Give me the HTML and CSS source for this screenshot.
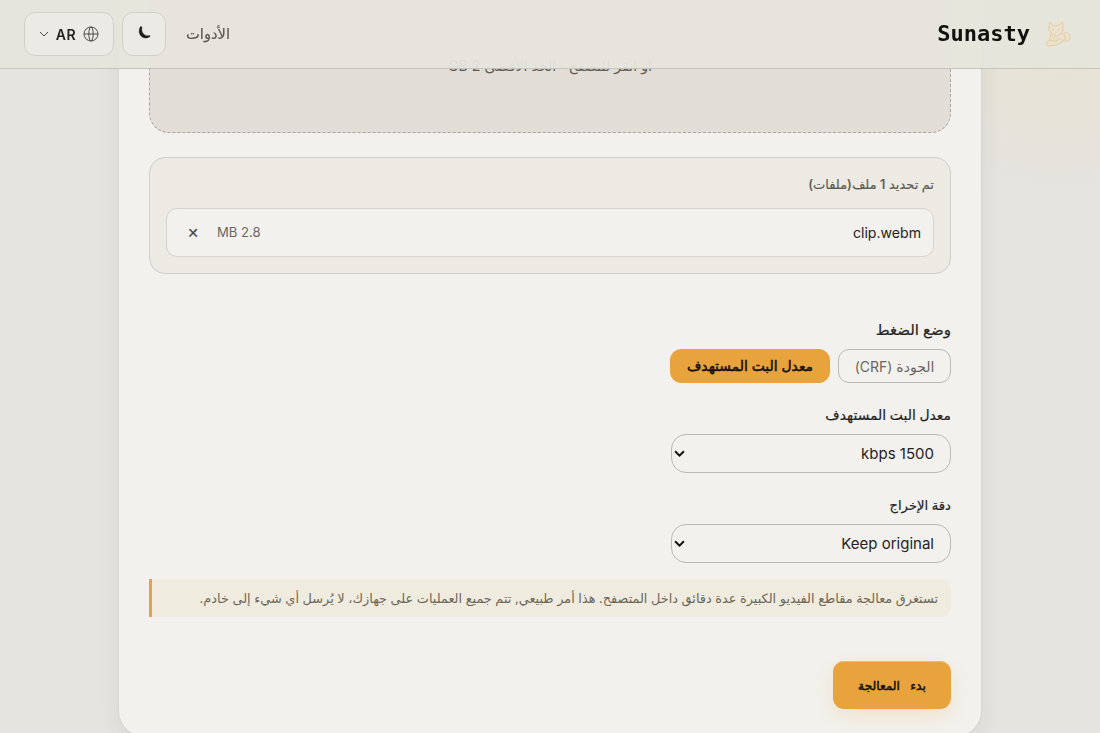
FILE: index.html
```html
<!DOCTYPE html>
<html lang="ar" dir="rtl">
	<head>
		<meta charset="UTF-8">
		<title>Sunasty</title>
		<link rel="stylesheet" href="styles.css">
	</head>

	<body>
		<header class="topbar">
			<a class="brand" dir="ltr">
				<span class="brand-name">Sunasty</span>
				<svg class="brand-logo" viewBox="0 0 28 28" aria-hidden="true">
					<path d="M6 1l3 4h6l4-4 1 8-2 4-5 3-5-3-3-4z M8.500 8.500l2 1 M14 9.500l2-1 M11 12l1 1 1-1 M7 13l-1 7 6 1 6-3 M18 12l3 2 1 5-4 2 M21 13c3-3 6 0 6 4 0 4-4 5-7 3 M6 20l-4 3 2 3 8-1 8-4 M9 16l1 3 M14 17l1 2"/>
				</svg>
			</a>
			<nav class="tools">
				<a class="tools-link">الأدوات</a>
				<button class="icon-btn">
					<svg class="moon" viewBox="0 0 16 16"><path d="M4.500 1.500C0.500 8 6 16.500 14 11.500V10.500C9 12 4.500 7.500 6 2z"/></svg>
				</button>
				<button class="lang-btn">
					<svg class="globe" viewBox="0 0 16 16"><circle cx="8" cy="8" r="7"/><ellipse cx="8" cy="8" rx="2.2" ry="7"/><path d="M1 8h14"/></svg>
					<span>AR</span>
					<svg class="chevron" viewBox="0 0 10 10"><path d="M1 3l4 4 4-4"/></svg>
				</button>
			</nav>
		</header>

		<main class="card">
			<div class="dropzone">
				<p>أو انقر للتصفح · الحد الأقصى 2 GB</p>
			</div>

			<section class="files">
				<p class="files-title">تم تحديد 1 ملف(ملفات)</p>
				<div class="file">
					<span class="file-name">clip.webm</span>
					<span class="file-size">2.8 MB</span>
					<button class="file-remove">✕</button>
				</div>
			</section>

			<section class="options">
				<div class="label label-mode">وضع الضغط</div>
				<div class="modes">
					<button class="mode">الجودة (CRF)</button>
					<button class="mode mode-active">معدل البت المستهدف</button>
				</div>
				<div class="label">معدل البت المستهدف</div>
				<div class="select">
					<span>1500 kbps</span>
					<svg viewBox="0 0 10 8"><path d="M1 2l4 4 4-4"/></svg>
				</div>
				<div class="label label-size">دقة الإخراج</div>
				<div class="select">
					<span>Keep original</span>
					<svg viewBox="0 0 10 8"><path d="M1 2l4 4 4-4"/></svg>
				</div>
			</section>

			<p class="note">تستغرق معالجة مقاطع الفيديو الكبيرة عدة دقائق داخل المتصفح. هذا أمر طبيعي, تتم جميع العمليات على جهازك، لا يُرسل أي شيء إلى خادم.</p>
			<button class="start">بدء المعالجة</button>
		</main>
	</body>
</html>
```

FILE: styles.css
```css
* {
	box-sizing: border-box;
}
html, body, p {
	margin: 0;
}
body {
	height: 733px;
	overflow: hidden;
	font-family: Inter, "DejaVu Sans", sans-serif;
	color: #24231f;
	background: radial-gradient(circle at 1060px 40px, #e7e2d3 0, rgba(229, 228, 224, 0) 170px), #e5e4e0;
}
button {
	font: inherit;
	color: inherit;
	border: none;
	background: none;
	padding: 0;
}
.topbar {
	position: fixed;
	top: 0;
	left: 0;
	right: 0;
	z-index: 1;
	height: 69px;
	padding: 0 24px;
	display: flex;
	align-items: center;
	justify-content: space-between;
	border-bottom: 1px solid #c6c4be;
	background: rgba(229, 228, 220, 0.94);
}
.brand {
	display: flex;
	align-items: center;
	gap: 14px;
	padding-right: 5px;
}
.brand-name {
	padding-bottom: 2px;
	font: bold 22px "DejaVu Sans Mono", monospace;
	color: #11110d;
}
.brand-logo {
	width: 27px;
	height: 27px;
	fill: rgba(236, 222, 196, 0.6);
	stroke: #e6c99b;
	stroke-width: 1;
	stroke-linejoin: round;
}
.tools {
	display: flex;
	align-items: center;
	gap: 8px;
}
.tools-link {
	margin-left: 12px;
	font-size: 14.7px;
	color: #5c5952;
	-webkit-text-stroke: 0.2px;
}
.icon-btn, .lang-btn {
	height: 44px;
	display: flex;
	align-items: center;
	justify-content: center;
	border: 1px solid #d0cfca;
	border-radius: 11px;
	background: #eceae4;
}
.icon-btn {
	width: 44px;
}
.moon {
	width: 16px;
	margin-bottom: 2px;
	fill: #1c1b18;
	stroke: #1c1b18;
	stroke-width: 0.4;
}
.lang-btn {
	width: 90px;
	gap: 7px;
	font-size: 14px;
	font-weight: 600;
	letter-spacing: 0.5px;
}
.globe {
	width: 16px;
	fill: none;
	stroke: #4c4a44;
}
.chevron {
	width: 10px;
	fill: none;
	stroke: #4c4a44;
}
.card {
	width: 864px;
	height: 737px;
	margin: 0 auto;
	padding: 0 30px;
	border: 1px solid #d6d5d0;
	border-top: none;
	border-radius: 0 0 26px 26px;
	background: #f2f1ed;
	box-shadow: 0 8px 24px rgba(60, 55, 40, 0.07);
}
.dropzone {
	height: 133px;
	padding-top: 57px;
	border: 1px dashed #aaa69d;
	border-top: none;
	border-radius: 0 0 20px 20px;
	background: #e2ded7;
	text-align: center;
	font-size: 14.2px;
	line-height: 18px;
	color: #5c5952;
}
.files {
	height: 117px;
	margin-top: 24px;
	padding: 16px;
	border: 1px solid #cfcdc8;
	border-radius: 16px;
	background: #eceae3;
}
.files-title {
	height: 34px;
	font-size: 13px;
	font-weight: 500;
	line-height: 20px;
	color: #5c5952;
	-webkit-text-stroke: 0.15px;
}
.file {
	height: 49px;
	padding: 0 12px 0 16px;
	display: flex;
	align-items: center;
	border: 1px solid #d6d4cf;
	border-radius: 11px;
	background: #f2f1ed;
}
.file-name {
	margin-left: auto;
	font-size: 14.1px;
}
.file-size {
	margin-left: 14px;
	padding-bottom: 1px;
	font-size: 13.1px;
	color: #6a6760;
}
.file-remove {
	width: 20px;
	padding-bottom: 1px;
	font-size: 14px;
	color: #4c4a44;
	-webkit-text-stroke: 0.2px;
}
.options {
	margin-top: 45px;
}
.label {
	height: 30px;
	font-size: 13.9px;
	font-weight: 500;
	line-height: 22px;
	-webkit-text-stroke: 0.2px;
}
.label-mode {
	font-size: 15px;
}
.label-size {
	font-size: 13.2px;
}
.modes {
	display: flex;
	gap: 8px;
	margin-bottom: 21px;
}
.mode {
	width: 113px;
	height: 34px;
	border: 1px solid #bbb9b3;
	border-radius: 11px;
	font-size: 14px;
	color: #6a6760;
	white-space: nowrap;
}
.mode-active {
	width: 160px;
	border-color: #e8a33d;
	background: #e8a33d;
	font-size: 13.9px;
	color: #11110d;
	-webkit-text-stroke: 0.5px;
}
.select {
	width: 280px;
	height: 39px;
	margin-bottom: 21px;
	padding: 0 16px 0 2px;
	display: flex;
	align-items: center;
	justify-content: space-between;
	border: 1px solid #bbb9b3;
	border-radius: 15px;
	font-size: 15px;
}
.select svg {
	width: 11px;
	margin-bottom: 1px;
	fill: none;
	stroke: #11110d;
	stroke-width: 1.8;
}
.note {
	height: 38px;
	margin-top: -5px;
	padding-right: 13px;
	border-left: 3px solid #e8a33d;
	border-radius: 0 10px 10px 0;
	background: #f0ebdf;
	font-size: 12.85px;
	line-height: 40px;
	white-space: nowrap;
	color: #6c6759;
}
.start {
	width: 118px;
	height: 48px;
	margin-top: 44px;
	display: block;
	border-radius: 11px;
	background: #e8a33d;
	box-shadow: 0 6px 18px rgba(232, 163, 61, 0.2), inset 0 1px 0 #efbd74;
	font-size: 12.2px;
	word-spacing: 7px;
	color: #11110d;
	-webkit-text-stroke: 0.5px;
}
```
